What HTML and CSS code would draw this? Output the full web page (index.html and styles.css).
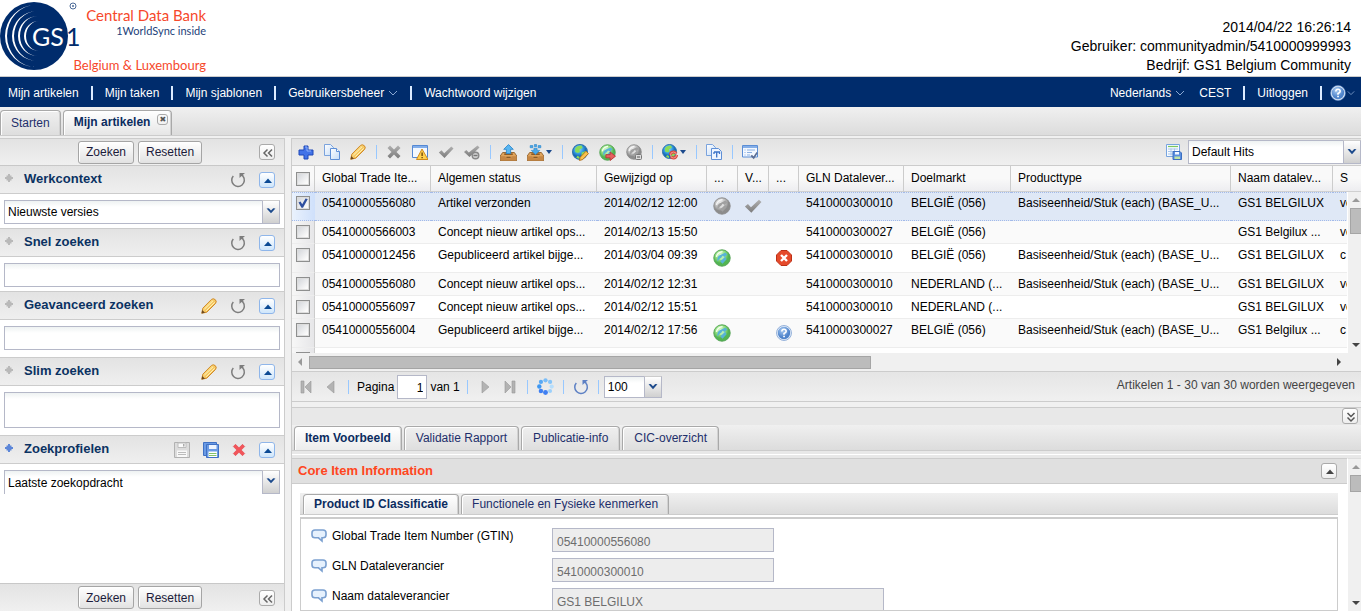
FILE: index.html
```html
<!DOCTYPE html>
<html lang="nl">
<head>
<meta charset="utf-8">
<title>Central Data Bank - Mijn artikelen</title>
<link rel="stylesheet" href="styles.css">
</head>
<body>
<svg class="sprite" aria-hidden="true">
  <defs>
    <linearGradient id="gold" x1="0" y1="0" x2="1" y2="1"><stop offset="0" stop-color="#fff0a0"/><stop offset="1" stop-color="#eda32c"/></linearGradient>
    <linearGradient id="grey" x1="0" y1="0" x2="0" y2="1"><stop offset="0" stop-color="#b0b0b0"/><stop offset="1" stop-color="#7c7c7c"/></linearGradient>
    <linearGradient id="paper" x1="0" y1="0" x2="1" y2="1"><stop offset="0" stop-color="#fff"/><stop offset="1" stop-color="#c5dcf7"/></linearGradient>
    <radialGradient id="ballGreen" cx=".4" cy=".3"><stop offset="0" stop-color="#dcfad0"/><stop offset=".6" stop-color="#93e080"/><stop offset="1" stop-color="#52b552"/></radialGradient>
    <radialGradient id="ballBlue" cx=".4" cy=".3"><stop offset="0" stop-color="#a6dbfb"/><stop offset=".6" stop-color="#37a0e4"/><stop offset="1" stop-color="#1767b5"/></radialGradient>
    <radialGradient id="ballGrey" cx=".4" cy=".3"><stop offset="0" stop-color="#eee"/><stop offset=".6" stop-color="#c2c2c2"/><stop offset="1" stop-color="#8c8c8c"/></radialGradient>
    <radialGradient id="ballHelp" cx=".4" cy=".3"><stop offset="0" stop-color="#a9cbf2"/><stop offset="1" stop-color="#4f84cb"/></radialGradient>
  </defs>
  <symbol id="i-plus" viewBox="0 0 16 16"><path d="M6 2h4v4h5v5h-5v4H6v-4H1V6h5z" fill="#4273e8" stroke="#1e49b8"/><path d="M7 3h2v4h4" fill="none" stroke="#8db1fa"/></symbol>
  <symbol id="i-copy" viewBox="0 0 16 16"><path d="M.5.5h6l3 3v8h-9z" fill="url(#paper)" stroke="#7ba3dd"/><path d="M6.500 4.500h6l3 3v8h-9z" fill="url(#paper)" stroke="#5f8fd6"/><path d="M12.500 4.500v3h3" fill="#fff" stroke="#5f8fd6"/></symbol>
  <symbol id="i-pencil" viewBox="0 0 16 16"><path d="M.8 15.200 1.800 10.200 10.500 1.400q1.800-1.400 3.700.2t.4 3.800L5.800 14.200z" fill="url(#gold)" stroke="#cf8a2a"/><path d="M3.500 11 12 2.800M5.200 12.800l8.500-8.500" stroke="#fff3b8"/><path d="M.5 15.500 1.300 12l2.700 2.700z" fill="#6e4a1f"/></symbol>
  <symbol id="i-x" viewBox="0 0 16 16"><path d="m1.500 4 2.500-2.500 4 4 4-4L14.500 4l-4 4 4 4-2.500 2.500-4-4-4 4L1.500 12l4-4z" fill="url(#grey)"/></symbol>
  <symbol id="i-redx" viewBox="0 0 16 16"><path d="m1.500 4 2.500-2.500L8 5.500l4-4L14.500 4l-4 4 4 4-2.500 2.500-4-4-4 4L1.500 12l4-4z" fill="#f2555a" stroke="#e0383f" stroke-width=".6"/></symbol>
  <symbol id="i-warn" viewBox="0 0 16 16"><path d="M.5 1.500h15v12H.5z" fill="#f3f8ff" stroke="#5488d4"/><path d="M1 2h14v2H1z" fill="#82aeea"/><path d="m10 5 6 10.500H4.500z" fill="#ffd04d" stroke="#cf8a1e"/><path d="M9.500 8.500h1.200v3.500H9.500zM9.500 13h1.200v1.200H9.500z" fill="#5a3300"/></symbol>
  <symbol id="i-check" viewBox="0 0 16 16"><path d="m.8 8.500 2.700-2.200 2.700 2.900L13.300 2.500l2.200 2-9 9.500z" fill="url(#grey)"/></symbol>
  <symbol id="i-checkstop" viewBox="0 0 16 16"><path d="m0 8 2.300-2 2.500 2.500L13.500 1.500 15.500 3.500 5.500 13z" fill="url(#grey)"/><circle cx="11.500" cy="11.500" r="3.300" fill="#ccc" stroke="#888" stroke-width="1.400"/><path d="M9.500 11.500h4" stroke="#777" stroke-width="1.300"/></symbol>
  <symbol id="i-tray" viewBox="0 0 16 16"><path d="M2.500 8h11l2.300 3.300v4.400H.2v-4.400z" fill="#dfa35b" stroke="#8d5a23" stroke-width=".8"/><path d="M.7 11.500H5l1 1.800h4l1-1.800h4.300v4H.7z" fill="#c68745"/><path d="M4 9.500h8M6 12.500h4" stroke="#6d4318"/></symbol>
  <symbol id="i-up" viewBox="0 0 16 16"><use href="#i-tray"/><path d="m8 .5 4.500 4.500H10v4H6V5H3.500z" fill="#59b6f1" stroke="#2a86cb" stroke-width=".8"/></symbol>
  <symbol id="i-down" viewBox="0 0 16 16"><use href="#i-tray"/><path d="M8 10 4 6h2.500V4h3v2H12zM3 1.500h2.500v2H3zM7 .5h2v2H7zM10.500 1.500H13v2h-2.500z" fill="#4aa9ea" stroke="#2a86cb" stroke-width=".6"/></symbol>
  <symbol id="i-land" viewBox="0 0 16 16"><path d="M3 4q2-3 6-2.500l1 2-3 2 .5 2-2 1L3 7.500zM9 8l4-1.500 1 2-2 4-2.500 1-.5-3zM5 11l2 1v2l-3-1z"/></symbol>
  <symbol id="i-earth" viewBox="0 0 16 16"><circle cx="7.500" cy="7.500" r="7" fill="url(#ballBlue)" stroke="#2d73ad"/><use href="#i-land" fill="#8bdc58"/></symbol>
  <symbol id="i-earthpencil" viewBox="0 0 16 16"><use href="#i-earth"/><path d="m7 15.500.7-3 5.500-5.700 2.300 2.200-5.500 5.700z" fill="#f9c24d" stroke="#b06c16" stroke-width=".8"/></symbol>
  <symbol id="i-ballg" viewBox="0 0 16 16"><circle cx="8" cy="8" r="7.300" fill="url(#ballGreen)" stroke="#4f9f50" stroke-width=".8"/><path d="M4 11Q3 6 7.500 4.800L11 3.200 12.800 5l-2 1.500L12 9l-3.500 4L6.500 11l2-2.500L6.500 8z" fill="#58b3d6"/><path d="M6 9.500 8.500 6l2 1-2.500 2.500z" fill="#b7eeb0"/><path d="M3 7Q4 2.800 8.500 2.300" fill="none" stroke="#f4fff0" stroke-width="1.200"/></symbol>
  <symbol id="i-ballx" viewBox="0 0 16 16"><circle cx="8" cy="8" r="7.300" fill="url(#ballGrey)" stroke="#8a8a8a" stroke-width=".8"/><path d="M4 11Q3 6 7.500 4.800L11 3.200 12.800 5l-2 1.500L12 9l-3.500 4L6.500 11l2-2.500L6.500 8z" fill="#a0a0a0"/><path d="M6 9.500 8.500 6l2 1-2.500 2.500z" fill="#dedede"/><path d="M3 7Q4 2.800 8.500 2.300" fill="none" stroke="#f6f6f6" stroke-width="1.200"/></symbol>
  <symbol id="i-ballarrow" viewBox="0 0 16 16"><use href="#i-ballg"/><path d="M6.500 10h4V7.500l5 4-5 4V13h-4z" fill="#e66060" stroke="#b93434" stroke-width=".8"/></symbol>
  <symbol id="i-ballstop" viewBox="0 0 16 16"><use href="#i-ballx"/><rect x="9.500" y="10.500" width="6" height="5" rx="1" fill="#ddd" stroke="#777"/><path d="M11 13h3" stroke="#555"/></symbol>
  <symbol id="i-earthred" viewBox="0 0 16 16"><use href="#i-earth"/><circle cx="11.500" cy="11" r="3" fill="none" stroke="#d9473c" stroke-width="3" stroke-dasharray="7.500 1.900"/><circle cx="11.500" cy="11" r="3" fill="none" stroke="#f79a90" stroke-width="1"/></symbol>
  <symbol id="i-copyt" viewBox="0 0 16 16"><path d="M.5.500h6l3 3v8h-9z" fill="url(#paper)" stroke="#7ba3dd"/><path d="M5.500 4.500h7l3 3v8h-10z" fill="#eef5ff" stroke="#5f8fd6"/><path d="M8 8h5.500v2M8 10V8M10.700 8v5.500" fill="none" stroke="#3b73c8" stroke-width="1.300"/></symbol>
  <symbol id="i-form" viewBox="0 0 16 16"><path d="M.5 1.500h15v11.500H.5z" fill="#f3f8ff" stroke="#5b8ed6"/><path d="M1 2h14v2H1z" fill="#85afe8"/><path d="M2.500 6h1M5 6h8M2.500 8.500h1M5 8.500h5M2.500 11h1M5 11h3" stroke="#8bb0e2"/><path d="m8.500 12 1.500-1.300 1.500 1.800L14.500 8l1.300 1-4 6.200z" fill="#5d6f94"/></symbol>
  <symbol id="i-savegrid" viewBox="0 0 16 16"><path d="M.5.500h13v12H.5z" fill="#f7fbff" stroke="#78a5df"/><path d="M2 2.500h10" stroke="#7cc75e" stroke-width="1.200"/><path d="M2 5h10M2 7.500h10M2 10h10M5 4.500v7M8.500 4.500v7" stroke="#a9c6ea"/><path d="M7 7.500h7l1.500 1.500v6.500H7z" fill="#5b8fdf" stroke="#3b6fc0"/><path d="M9 8h4v2.500H9z" fill="#f4f8ff"/><path d="M8.500 12.500h5.500V15H8.500z" fill="#bfe3a4"/></symbol>
  <symbol id="i-reset" viewBox="0 0 16 16"><path d="M3.300 4A6.300 6.300 0 1 0 13.200 4.500" fill="none" stroke="currentColor" stroke-width="1.500"/><path d="M9.500 1h5.500l-2 1.800 1 1.500-1.300.8-1.200-1.200-2 2z" fill="currentColor"/></symbol>
  <symbol id="i-save" viewBox="0 0 16 16"><path d="M.5.500h15v15H.5z" fill="#dcdcdc" stroke="#b1b1b1"/><path d="M4 1h8v4.500H4z" fill="#fafafa" stroke="#bcbcbc"/><path d="M9 2h1.500v2.500H9z" fill="#aaa"/><path d="M3 8.500h10V15H3z" fill="#f8f8f8"/><path d="M4 10.500h8M4 12.500h8" stroke="#bbb"/></symbol>
  <symbol id="i-saveall" viewBox="0 0 16 16"><path d="M.5.500h13v13H.5z" fill="#6a9ae4" stroke="#3f71c4"/><path d="M3.500 2.500h12v13h-12z" fill="#6a9ae4" stroke="#3f71c4"/><path d="M6 3h7.500v4H6z" fill="#edf4ff"/><path d="M5.500 9.500h8.500v5.500H5.500z" fill="#fff"/><path d="M6 11.500h7.500M6 13.500h7.500" stroke="#83c268"/></symbol>
  <symbol id="i-help" viewBox="0 0 16 16"><circle cx="8" cy="8" r="6.800" fill="url(#ballHelp)" stroke="#dfeaf8" stroke-width="1.200"/><circle cx="8" cy="8" r="7.500" fill="none" stroke="#5d88c6" stroke-width=".6"/><path d="M5.800 6.500Q6 4.300 8 4.300t2.200 1.900Q10.200 7.500 8 8.500v1.200" fill="none" stroke="#fff" stroke-width="1.600"/><path d="M7.200 10.800h1.700v1.500H7.200z" fill="#fff"/></symbol>
  <symbol id="i-error" viewBox="0 0 16 16"><path d="M5 .5h6L15.500 5v6L11 15.500H5L.5 11V5z" fill="#e54a2b" stroke="#bd3016"/><path d="m5 5 6 6M11 5l-6 6" stroke="#fff" stroke-width="2.400"/></symbol>
  <symbol id="i-dbl" viewBox="0 0 16 16"><path d="M7.500 4.500 4 8l3.500 3.500M12 4.500 8.500 8l3.500 3.500" fill="none" stroke="#666" stroke-width="1.500"/></symbol>
  <symbol id="i-dbldown" viewBox="0 0 16 16"><path d="M4.500 4 8 7.500 11.500 4M4.500 8.500 8 12l3.500-3.500" fill="none" stroke="#555" stroke-width="1.500"/></symbol>
  <symbol id="i-tri" viewBox="0 0 16 16"><path d="m8 5.500 4 4.500H4z" fill="currentColor"/></symbol>
  <symbol id="i-arrow" viewBox="0 0 16 16"><path d="m3 5 2.500-.3L8 7.200l2.500-2.500L13 5 8 10.500z" fill="#1c4a8c"/></symbol>
  <symbol id="i-chev" viewBox="0 0 10 6"><path d="m1 1 4 4 4-4" fill="none" stroke="#8aa8d2"/></symbol>
  <symbol id="i-pin" viewBox="0 0 8 8"><path d="M3 0h2v1.500h1.500V3H8v2H6.500v1.500H5V8H3V6.500H1.500V5H0V3h1.500V1.500H3z" fill="currentColor"/></symbol>
  <symbol id="i-bubble" viewBox="0 0 16 16"><path d="M4 2h8q3 0 3 2.800V7q0 2.800-3 2.800h-1V13L7.500 9.800H4Q1 9.800 1 7V4.800Q1 2 4 2z" fill="#e6f1fd" stroke="#7ba0d0" stroke-width="1.600"/></symbol>
  <symbol id="i-first" viewBox="0 0 16 16"><path d="M3 2h3v12H3zM13 2v12L7 8z" fill="#b3b3b3" stroke="#999" stroke-width=".6"/></symbol>
  <symbol id="i-prev" viewBox="0 0 16 16"><path d="M11 2v12L4 8z" fill="#b3b3b3" stroke="#999" stroke-width=".6"/></symbol>
  <symbol id="i-spin" viewBox="0 0 16 16"><g fill="#3f7ff2"><circle cx="8" cy="13.700" r="2.300"/><circle cx="12.300" cy="12.300" r="1.900" fill="#9cd0fb"/><circle cx="13.800" cy="8" r="2" fill="#b7defc"/><circle cx="12.300" cy="3.700" r="2" fill="#86c4f8"/><circle cx="8" cy="2.200" r="2" fill="#7abdf8"/><circle cx="3.700" cy="3.700" r="2" fill="#58a9f5"/><circle cx="2.200" cy="8" r="2.100" fill="#3d97f2"/><circle cx="3.700" cy="12.300" r="2.100"/></g></symbol>
</svg>

<header class="masthead">
  <svg class="logo" width="208" height="76" viewBox="0 0 208 76" role="img" aria-label="GS1 Central Data Bank">
    <circle cx="34" cy="36" r="34" fill="#002c6c"/>
    <g fill="#fff">
      <path d="M36 5A31 31 0 0 0 36 67A29 31 0 0 1 36 5z"/>
      <path d="M37 11A25 25 0 0 0 37 61A23 25 0 0 1 37 11z"/>
      <path d="M38 16A20 20 0 0 0 38 56A18 20 0 0 1 38 16z"/>
      <path d="M39 21A15 15 0 0 0 39 51A13 15 0 0 1 39 21z"/>
    </g>
    <text x="32" y="46" class="logo-gs" fill="#fff">GS</text>
    <text x="66" y="46" class="logo-gs" fill="#002c6c">1</text>
    <circle cx="73" cy="6" r="3" fill="none" stroke="#4d6b98"/><circle cx="73" cy="6" r="1" fill="#4d6b98"/>
    <text x="206" y="21" class="logo-name">Central Data Bank</text>
    <text x="206" y="35" class="logo-sub">1WorldSync inside</text>
    <text x="206" y="70" class="logo-land">Belgium &amp; Luxembourg</text>
  </svg>
  <div class="session">
    <div>2014/04/22 16:26:14</div>
    <div>Gebruiker: communityadmin/5410000999993</div>
    <div>Bedrijf: GS1 Belgium Community</div>
  </div>
</header>

<nav class="nav">
  <a href="#">Mijn artikelen</a><i></i><a href="#">Mijn taken</a><i></i><a href="#">Mijn sjablonen</a><i></i><a href="#">Gebruikersbeheer <svg width="10" height="6"><use href="#i-chev"/></svg></a><i></i><a href="#">Wachtwoord wijzigen</a>
  <span class="spacer"></span>
  <a href="#">Nederlands <svg width="10" height="6"><use href="#i-chev"/></svg></a><span class="zone">CEST</span><i></i><a href="#">Uitloggen</a><i></i><a href="#" class="help" aria-label="Help"><svg width="16" height="16"><use href="#i-help"/></svg><svg width="8" height="6"><use href="#i-chev"/></svg></a>
</nav>

<div class="tabs main-tabs">
  <button class="tab">Starten</button>
  <button class="tab active closable">Mijn artikelen<span class="close">✖</span></button>
</div>

<div class="work">
  <aside class="side">
    <div class="side-bar"><button class="btn">Zoeken</button><button class="btn">Resetten</button><button class="tool dbl" aria-label="Inklappen"><svg width="16" height="16"><use href="#i-dbl"/></svg></button></div>

    <div class="phead"><svg class="pin" width="8" height="8"><use href="#i-pin"/></svg><h2>Werkcontext</h2><button class="ico reset" aria-label="Herstellen"><svg width="16" height="16"><use href="#i-reset"/></svg></button><button class="tool blue" aria-label="Inklappen"><svg width="16" height="16"><use href="#i-tri"/></svg></button></div>
    <div class="pbody tight"><div class="combo"><select aria-label="Werkcontext"><option>Nieuwste versies</option></select><svg class="trigger" width="18" height="24" viewBox="-1 -3 18 24"><use href="#i-arrow" width="16" height="16"/></svg></div></div>

    <div class="phead"><svg class="pin" width="8" height="8"><use href="#i-pin"/></svg><h2>Snel zoeken</h2><button class="ico reset" aria-label="Herstellen"><svg width="16" height="16"><use href="#i-reset"/></svg></button><button class="tool blue" aria-label="Inklappen"><svg width="16" height="16"><use href="#i-tri"/></svg></button></div>
    <div class="pbody tight"><input class="field" type="text" aria-label="Snel zoeken"></div>

    <div class="phead"><svg class="pin" width="8" height="8"><use href="#i-pin"/></svg><h2>Geavanceerd zoeken</h2><button class="ico" aria-label="Bewerken"><svg width="16" height="16"><use href="#i-pencil"/></svg></button><button class="ico reset" aria-label="Herstellen"><svg width="16" height="16"><use href="#i-reset"/></svg></button><button class="tool blue" aria-label="Inklappen"><svg width="16" height="16"><use href="#i-tri"/></svg></button></div>
    <div class="pbody"><input class="field" type="text" aria-label="Geavanceerd zoeken"></div>

    <div class="phead"><svg class="pin" width="8" height="8"><use href="#i-pin"/></svg><h2>Slim zoeken</h2><button class="ico" aria-label="Bewerken"><svg width="16" height="16"><use href="#i-pencil"/></svg></button><button class="ico reset" aria-label="Herstellen"><svg width="16" height="16"><use href="#i-reset"/></svg></button><button class="tool blue" aria-label="Inklappen"><svg width="16" height="16"><use href="#i-tri"/></svg></button></div>
    <div class="pbody"><textarea class="field tall" aria-label="Slim zoeken"></textarea></div>

    <div class="phead"><svg class="pin on" width="8" height="8"><use href="#i-pin"/></svg><h2>Zoekprofielen</h2><button class="ico" aria-label="Opslaan"><svg width="16" height="16"><use href="#i-save"/></svg></button><button class="ico" aria-label="Opslaan als"><svg width="16" height="16"><use href="#i-saveall"/></svg></button><button class="ico" aria-label="Verwijderen"><svg width="14" height="16"><use href="#i-redx"/></svg></button><button class="tool blue" aria-label="Inklappen"><svg width="16" height="16"><use href="#i-tri"/></svg></button></div>
    <div class="pbody grow"><div class="combo open"><select aria-label="Zoekprofiel"><option>Laatste zoekopdracht</option></select><svg class="trigger" width="18" height="24" viewBox="-1 -3 18 24"><use href="#i-arrow" width="16" height="16"/></svg></div></div>

    <div class="side-bar foot"><button class="btn">Zoeken</button><button class="btn">Resetten</button><button class="tool dbl" aria-label="Inklappen"><svg width="16" height="16"><use href="#i-dbl"/></svg></button></div>
  </aside>

  <main class="main">
    <div class="toolbar">
      <button class="ico" aria-label="Nieuw"><svg width="16" height="16"><use href="#i-plus"/></svg></button>
      <button class="ico" aria-label="Kopieren"><svg width="16" height="16"><use href="#i-copy"/></svg></button>
      <button class="ico" aria-label="Bewerken"><svg width="16" height="16"><use href="#i-pencil"/></svg></button><i></i>
      <button class="ico" aria-label="Verwijderen"><svg width="16" height="16"><use href="#i-x"/></svg></button>
      <button class="ico" aria-label="Waarschuwing"><svg width="16" height="16"><use href="#i-warn"/></svg></button>
      <button class="ico" aria-label="Valideren"><svg width="16" height="16"><use href="#i-check"/></svg></button>
      <button class="ico" aria-label="Validatie stoppen"><svg width="16" height="16"><use href="#i-checkstop"/></svg></button><i></i>
      <button class="ico" aria-label="Import"><svg width="17" height="17"><use href="#i-up"/></svg></button>
      <button class="ico menu" aria-label="Export"><svg width="17" height="17"><use href="#i-down"/></svg></button><i></i>
      <button class="ico" aria-label="Publicatie bewerken"><svg width="17" height="17"><use href="#i-earthpencil"/></svg></button>
      <button class="ico" aria-label="Publiceren"><svg width="17" height="17"><use href="#i-ballarrow"/></svg></button>
      <button class="ico" aria-label="Publicatie stoppen"><svg width="16" height="16"><use href="#i-ballstop"/></svg></button><i></i>
      <button class="ico menu" aria-label="Synchroniseren"><svg width="16" height="16"><use href="#i-earthred"/></svg></button><i></i>
      <button class="ico" aria-label="Sjabloon"><svg width="16" height="16"><use href="#i-copyt"/></svg></button><i></i>
      <button class="ico" aria-label="Formulier"><svg width="16" height="16"><use href="#i-form"/></svg></button>
      <span class="spacer"></span>
      <button class="ico" aria-label="Weergave opslaan"><svg width="16" height="16"><use href="#i-savegrid"/></svg></button>
      <div class="combo hits"><select aria-label="Weergave"><option>Default Hits</option></select><svg class="trigger" width="18" height="24" viewBox="-1 -4 18 24"><use href="#i-arrow" width="16" height="16"/></svg></div>
    </div>

    <div class="grid">
      <table>
        <colgroup><col class="c-check"><col class="c-gtin"><col class="c-status"><col class="c-date"><col class="c-flag"><col class="c-flag"><col class="c-last"><col class="c-gln"><col class="c-market"><col class="c-type"><col class="c-name"><col class="c-s"></colgroup>
        <thead><tr><th><input type="checkbox" aria-label="Alles selecteren"></th><th>Global Trade Ite...</th><th>Algemen status</th><th>Gewijzigd op</th><th>...</th><th>V...</th><th>...</th><th>GLN Datalever...</th><th>Doelmarkt</th><th>Producttype</th><th>Naam datalev...</th><th>S</th></tr></thead>
        <tbody>
          <tr class="sel high"><td><input type="checkbox" checked aria-label="Selecteren"></td><td>05410000556080</td><td>Artikel verzonden</td><td>2014/02/12 12:00</td><td><svg width="18" height="18"><use href="#i-ballx"/></svg></td><td><svg width="18" height="18"><use href="#i-check"/></svg></td><td></td><td>5410000300010</td><td>BELGIË (056)</td><td>Basiseenheid/Stuk (each) (BASE_U...</td><td>GS1 BELGILUX</td><td>ve</td></tr>
          <tr class="alt"><td><input type="checkbox" aria-label="Selecteren"></td><td>05410000566003</td><td>Concept nieuw artikel ops...</td><td>2014/02/13 15:50</td><td></td><td></td><td></td><td>5410000300027</td><td>BELGIË (056)</td><td></td><td>GS1 Belgilux ...</td><td>ve</td></tr>
          <tr class="high"><td><input type="checkbox" aria-label="Selecteren"></td><td>05410000012456</td><td>Gepubliceerd artikel bijge...</td><td>2014/03/04 09:39</td><td><svg width="18" height="18"><use href="#i-ballg"/></svg></td><td></td><td><svg class="mark" width="16" height="18"><use href="#i-error"/></svg></td><td>5410000300010</td><td>BELGIË (056)</td><td>Basiseenheid/Stuk (each) (BASE_U...</td><td>GS1 BELGILUX</td><td>c</td></tr>
          <tr class="alt"><td><input type="checkbox" aria-label="Selecteren"></td><td>05410000556080</td><td>Concept nieuw artikel ops...</td><td>2014/02/12 12:31</td><td></td><td></td><td></td><td>5410000300010</td><td>NEDERLAND (...</td><td>Basiseenheid/Stuk (each) (BASE_U...</td><td>GS1 BELGILUX</td><td>ve</td></tr>
          <tr><td><input type="checkbox" aria-label="Selecteren"></td><td>05410000556097</td><td>Concept nieuw artikel ops...</td><td>2014/02/12 15:51</td><td></td><td></td><td></td><td>5410000300010</td><td>NEDERLAND (...</td><td></td><td>GS1 BELGILUX</td><td>ve</td></tr>
          <tr class="alt high"><td><input type="checkbox" aria-label="Selecteren"></td><td>05410000556004</td><td>Gepubliceerd artikel bijge...</td><td>2014/02/12 17:56</td><td><svg width="18" height="18"><use href="#i-ballg"/></svg></td><td></td><td><svg class="mark" width="16" height="18"><use href="#i-help"/></svg></td><td>5410000300027</td><td>BELGIË (056)</td><td>Basiseenheid/Stuk (each) (BASE_U...</td><td>GS1 Belgilux ...</td><td>c</td></tr>
          <tr><td><input type="checkbox" aria-label="Selecteren"></td><td></td><td></td><td></td><td></td><td></td><td></td><td></td><td></td><td></td><td></td><td></td></tr>
        </tbody>
      </table>
      <div class="vscroll"><span class="up"></span><span class="thumb"></span><span class="spacer"></span><span class="down"></span></div>
    </div>
    <div class="hscroll"><span class="left"></span><span class="thumb"></span><span class="spacer"></span><span class="right"></span></div>

    <div class="paging">
      <button class="ico" aria-label="Eerste pagina"><svg width="16" height="16"><use href="#i-first"/></svg></button>
      <button class="ico" aria-label="Vorige pagina"><svg width="16" height="16"><use href="#i-prev"/></svg></button><i></i>
      <label for="page">Pagina</label><input id="page" class="page" type="text" value="1"><span class="of">van 1</span><i></i>
      <button class="ico flip" aria-label="Volgende pagina"><svg width="16" height="16"><use href="#i-prev"/></svg></button>
      <button class="ico flip" aria-label="Laatste pagina"><svg width="16" height="16"><use href="#i-first"/></svg></button><i></i>
      <svg width="17" height="17"><use href="#i-spin"/></svg><i></i>
      <button class="ico again" aria-label="Vernieuwen"><svg width="16" height="16"><use href="#i-reset"/></svg></button><i></i>
      <div class="combo size"><select aria-label="Aantal per pagina"><option>100</option></select><svg class="trigger" width="18" height="22" viewBox="-1 -3 18 22"><use href="#i-arrow" width="16" height="16"/></svg></div>
      <span class="spacer"></span><span class="count">Artikelen 1 - 30 van 30 worden weergegeven</span>
    </div>

    <section class="detail">
      <div class="detail-top"><button class="tool dbl" aria-label="Inklappen"><svg width="16" height="16"><use href="#i-dbldown"/></svg></button></div>
      <div class="tabs detail-tabs"><button class="tab active">Item Voorbeeld</button><button class="tab">Validatie Rapport</button><button class="tab">Publicatie-info</button><button class="tab">CIC-overzicht</button></div>
      <div class="detail-body">
        <div class="core">
          <div class="core-head"><h2>Core Item Information</h2><button class="tool dbl" aria-label="Inklappen"><svg width="16" height="16"><use href="#i-tri"/></svg></button></div>
          <div class="inner">
            <div class="tabs inner-tabs"><button class="tab active">Product ID Classificatie</button><button class="tab">Functionele en Fysieke kenmerken</button></div>
            <div class="form">
              <svg width="16" height="16"><use href="#i-bubble"/></svg><label for="f1">Global Trade Item Number (GTIN)</label><input id="f1" disabled value="05410000556080">
              <svg width="16" height="16"><use href="#i-bubble"/></svg><label for="f2">GLN Dataleverancier</label><input id="f2" disabled value="5410000300010">
              <svg width="16" height="16"><use href="#i-bubble"/></svg><label for="f3">Naam dataleverancier</label><input id="f3" class="wide" disabled value="GS1 BELGILUX">
            </div>
          </div>
        </div>
        <div class="vscroll small"><span class="up"></span><span class="thumb"></span><span class="spacer"></span><span class="down"></span></div>
      </div>
    </section>
  </main>
</div>
</body>
</html>
```
FILE: styles.css
```css
* { box-sizing: border-box; }
body {
  margin: 0;
  height: 100vh;
  display: flex;
  flex-direction: column;
  overflow: hidden;
  background: #f0f0f0;
  color: #000;
  font: 12px/16px "Liberation Sans", Arial, sans-serif;
}
button, input, select, textarea { font: inherit; color: inherit; }
button { border: 0; padding: 0; background: none; }
h2 { margin: 0; font-size: 13px; line-height: 16px; color: #0b3262; }
svg { display: block; flex: none; }
.sprite { position: absolute; width: 0; height: 0; }
.spacer { flex: 1; }

.masthead {
  flex: none;
  height: 77px;
  display: flex;
  justify-content: space-between;
  align-items: flex-end;
  background: #fff;
  border-bottom: 1px solid #ccc;
}
.logo text { font-family: Lato, "Open Sans", sans-serif; }
.logo .logo-gs { font-size: 25px; }
.logo .logo-name { font-size: 15px; fill: #f6482b; text-anchor: end; }
.logo .logo-sub { font-size: 11px; fill: #1d3f7a; text-anchor: end; }
.logo .logo-land { font-size: 13px; fill: #f6482b; text-anchor: end; }
.session { padding: 0 10px 1px 0; text-align: right; font-size: 14px; line-height: 19px; }

.nav {
  flex: none;
  height: 30px;
  display: flex;
  align-items: center;
  padding: 1px 6px 0 8px;
  background: #002c6c;
  color: #fff;
}
.nav a { display: flex; align-items: center; gap: 4px; color: #fff; text-decoration: none; }
.nav i { width: 2px; height: 14px; margin: 0 12px; background: #dcebff; }
.nav .zone { margin-left: 14px; }
.nav .help { gap: 1px; margin-left: -4px; }

.tabs { flex: none; display: flex; align-items: flex-end; background: linear-gradient(#f0f0f0, #dcdcdc); }
.tab {
  height: 24px;
  padding: 0 11px 2px;
  color: #1e2f6b;
  border: 1px solid #a9a9a9;
  border-bottom: 0;
  border-radius: 4px 4px 0 0;
  background: linear-gradient(#efefef, #dedede);
  box-shadow: inset 1px 1px #fff, inset -1px 0 #d2d2d2;
}
.tab.active { padding: 0 10px 2px; color: #0b2c60; font-weight: bold; background: linear-gradient(#fff, #ececec); }
.main-tabs { height: 29px; gap: 2px; border-bottom: 1px solid #ccc; }
.main-tabs .tab { height: 25px; padding: 0 10px 1px; }
.main-tabs .active { background: linear-gradient(#fff, #e6e6e6); }
.main-tabs .closable { display: flex; padding: 3px 3px 0 10px; }
.close {
  width: 11px;
  height: 11px;
  margin-left: 7px;
  border: 1px solid #aaa;
  border-radius: 3px;
  font: bold 8px/9px "DejaVu Sans", sans-serif;
  color: #555;
}

.work { flex: 1; min-height: 0; display: flex; gap: 6px; padding-top: 2px; }
.side {
  width: 285px;
  flex: none;
  display: flex;
  flex-direction: column;
  background: #fff;
  border: solid #ccc;
  border-width: 1px 1px 0 0;
}
.side-bar {
  flex: none;
  height: 27px;
  display: flex;
  align-items: center;
  gap: 4px;
  padding: 0 9px 0 78px;
  background: linear-gradient(#e3e3e3, #f0f0f0);
  border-bottom: 1px solid #c8c8c8;
}
.side-bar .tool { margin-left: auto; }
.side-bar.foot { height: 28px; border: 0; border-top: 1px solid #c8c8c8; }
.btn {
  height: 23px;
  padding: 0 7px;
  border: 1px solid #a5a5a5;
  border-radius: 3px;
  background: linear-gradient(#fff, #e2e2e2);
  box-shadow: inset 1px 1px #fff;
  color: #1b1b3a;
}
.tool {
  width: 16px;
  height: 16px;
  display: grid;
  place-items: center;
  border-radius: 3px;
  background: linear-gradient(#fff, #eee);
  border: 1px solid #aaa;
  color: #444;
}
.tool.blue { border-color: #8fb6ea; background: linear-gradient(#fff, #cfe6fb); color: #0b4a94; }
.phead {
  flex: none;
  height: 28px;
  display: flex;
  align-items: center;
  gap: 13px;
  padding: 0 9px 0 5px;
  border-bottom: 1px solid #ccc;
  background: linear-gradient(#e3e3e3, #efefef);
}
.pbody + .phead { height: 29px; border-top: 1px solid #ccc; }
.phead h2 { flex: 1; margin-right: -13px; padding-bottom: 2px; margin-left: -2px; }
.pin { color: #b9b9b9; margin-bottom: 4px; }
.pin.on { color: #5c86d8; }
.reset { color: #7d7d7d; }
.again { color: #5d80c4; }
.ico { flex: none; }
.pbody { flex: none; padding: 6px 4px 7px; }
.pbody.tight { padding-bottom: 4px; }
.pbody.grow { flex: 1; min-height: 0; }
.field {
  display: block;
  width: 100%;
  max-width: 276px;
  height: 24px;
  padding: 0 4px;
  border: 1px solid #b5b8c8;
  background: linear-gradient(#eef2f2, #fff 6px);
  resize: none;
}
.field.tall { height: 36px; }
.combo { position: relative; }
.combo select {
  appearance: none;
  display: block;
  width: 100%;
  height: 24px;
  padding: 0 22px 0 3px;
  border: 1px solid #b5b8c8;
  border-radius: 0;
  background: linear-gradient(#eef2f2, #fff 6px);
  opacity: 1;
}
.trigger {
  position: absolute;
  right: 0;
  top: 0;
  background: linear-gradient(#fff, #d0d0d0);
  border: 1px solid #b5b8c8;
  border-top-color: #ccc;
}
.combo.open select { border-bottom: 0; }

.main { flex: 1; min-width: 0; display: flex; flex-direction: column; border-left: 1px solid #ccc; border-top: 1px solid #ccc; }
.toolbar {
  flex: none;
  height: 27px;
  display: flex;
  align-items: center;
  gap: 10px;
  padding-left: 6px;
  background: linear-gradient(#e3e3e3, #f0f0f0);
  border-bottom: 1px solid #ccc;
}
.toolbar i { width: 1px; height: 14px; margin-right: -1px; background: #98c8ff; }
.menu { display: flex; align-items: center; gap: 2px; }
.menu::after { content: ""; border: solid transparent; border-width: 4px 3px 0; border-top-color: #1c4a8c; }
.combo.hits { width: 173px; margin-left: -4px; }

.grid { flex: none; height: 187px; position: relative; overflow: hidden; background: #fff; }
table { table-layout: fixed; width: 1140px; border-collapse: separate; border-spacing: 0; }
.c-check { width: 23px; } .c-gtin { width: 116px; } .c-status { width: 166px; } .c-date { width: 110px; }
.c-flag { width: 31px; } .c-last { width: 30px; } .c-gln { width: 105px; } .c-market { width: 107px; }
.c-type { width: 220px; } .c-name { width: 102px; } .c-s { width: 99px; }
th {
  height: 26px;
  padding: 0 0 1px 7px;
  text-align: left;
  font-weight: normal;
  white-space: nowrap;
  overflow: hidden;
  border-right: 1px solid #ccc;
  border-bottom: 1px solid #d0d0d0;
  background: linear-gradient(#f9f9f9 50%, #ededf0);
}
td {
  height: 23px;
  padding: 3px 0 0 7px;
  vertical-align: top;
  white-space: nowrap;
  overflow: hidden;
  border-bottom: 1px solid #ededed;
}
th:first-child, td:first-child { padding-left: 4px; }
td:first-child { border-right: 1px solid #ccc; background: linear-gradient(90deg, #f7f7f7, #e6e6e8); }
.high td { height: 29px; }
.alt td { background-color: #fafafa; }
.sel td { padding-top: 2px; background: #dfe8f6; border: dotted #a3bae9; border-width: 1px 0; }
.sel td:first-child { background: linear-gradient(90deg, #eaf2fd, #cfe0fb); }
td svg { margin: 2px 0 0 -1px; }
td .mark { margin-left: 0; }
input[type="checkbox"] {
  appearance: none;
  display: grid;
  place-items: center;
  width: 14px;
  height: 14px;
  margin: 2px 0 0;
  border: 1px solid #8e8f8f;
  outline: 1px solid #ddd;
  outline-offset: -2px;
  background: linear-gradient(135deg, #d0d3d8, #fafafa 80%);
}
td input[type="checkbox"] { margin-top: 1px; }
input[type="checkbox"]:checked::before {
  content: "";
  width: 10px;
  height: 10px;
  background: #2f4f9f;
  clip-path: polygon(5% 45%, 25% 35%, 42% 62%, 75% 5%, 98% 10%, 50% 98%, 35% 98%);
}

.vscroll {
  position: absolute;
  top: 26px;
  right: 0;
  bottom: 0;
  width: 14px;
  display: flex;
  flex-direction: column;
  align-items: flex-end;
  background: #f0f0f0;
  border-left: 1px solid #fff;
}
.vscroll .thumb { width: 11px; height: 26px; background: #bcbcbc; border: 1px solid #a5a5a5; border-right: 0; }
.up, .down { margin: 6px 1px; border: solid transparent; border-width: 0 4px 4px; border-bottom-color: #999; }
.down { border-width: 4px 4px 0; border-top-color: #444; }
.hscroll { flex: none; height: 18px; display: flex; align-items: center; padding-right: 20px; background: #f0f0f0; }
.hscroll .thumb { width: 562px; max-width: 60%; height: 13px; background: #bcbcbc; border: 1px solid #a5a5a5; }
.left, .right { margin: 0 7px 0 6px; border: solid transparent; border-width: 4px 4px 4px 0; border-right-color: #999; }
.right { margin: 0; border-width: 4px 0 4px 4px; border-left-color: #444; }

.paging {
  flex: none;
  height: 31px;
  display: flex;
  align-items: center;
  gap: 9px;
  padding: 0 6px;
  border: solid #ccc;
  border-width: 1px 0;
  background: linear-gradient(#e5e5e5, #f0f0f0);
}
.paging i { width: 1px; height: 14px; background: #98c8ff; }
.paging label { margin: 0 -6px 0 -1px; }
.page { width: 30px; height: 24px; padding: 2px 3px 0; border: 1px solid #b5b8c8; text-align: right; background: #fff; }
.of { margin: 0 -2px 0 -6px; }
.flip { transform: scaleX(-1); }
.size { width: 58px; margin-left: -4px; }
.size select, .size .trigger { height: 22px; }
.count { color: #444; padding-bottom: 3px; }

.detail { flex: 1; min-height: 0; display: flex; flex-direction: column; margin-top: 5px; border-top: 1px solid #ccc; background: #e8e8e8; }
.detail-top { flex: none; height: 17px; display: flex; justify-content: flex-end; padding-right: 3px; }
.detail-tabs { height: 26px; gap: 2px; padding-left: 2px; border-bottom: 1px solid #ccc; }
.detail-body { flex: 1; min-height: 0; position: relative; margin-top: 3px; border-top: 1px solid #fff; padding-top: 3px; overflow: hidden; }
.core { height: 100%; margin-right: 14px; display: flex; flex-direction: column; background: #fff; border-top: 1px solid #ccc; }
.core-head {
  flex: none;
  height: 25px;
  display: flex;
  align-items: center;
  justify-content: space-between;
  padding: 0 10px 0 6px;
  background: #e0e0e0;
  border-bottom: 1px solid #ccc;
}
.core-head h2 { color: #ff4621; }
.inner { flex: 1; min-height: 0; margin: 9px 9px 0 8px; display: flex; flex-direction: column; }
.inner-tabs { height: 22px; gap: 2px; padding-left: 3px; border-bottom: 1px solid #ccc; }
.inner-tabs .tab { height: 20px; padding: 0 10px 1px; }
.form {
  flex: 1;
  min-height: 0;
  display: grid;
  grid-template-columns: 17px 216px 1fr;
  grid-auto-rows: 24px;
  align-items: start;
  align-content: start;
  gap: 6px 4px;
  margin-top: 2px;
  padding: 9px 10px 0;
  border: 1px solid #ccc;
  border-top: 2px solid #ccc;
  overflow: hidden;
}
.form input { width: 222px; height: 24px; padding: 3px 4px 0; border: 1px solid #b5b8c8; background: #ededed; color: #6d6d6d; }
.form input.wide { width: 332px; }
.vscroll.small { top: 3px; border-top: 1px solid #ddd; }
.small .thumb { height: 17px; }
```
